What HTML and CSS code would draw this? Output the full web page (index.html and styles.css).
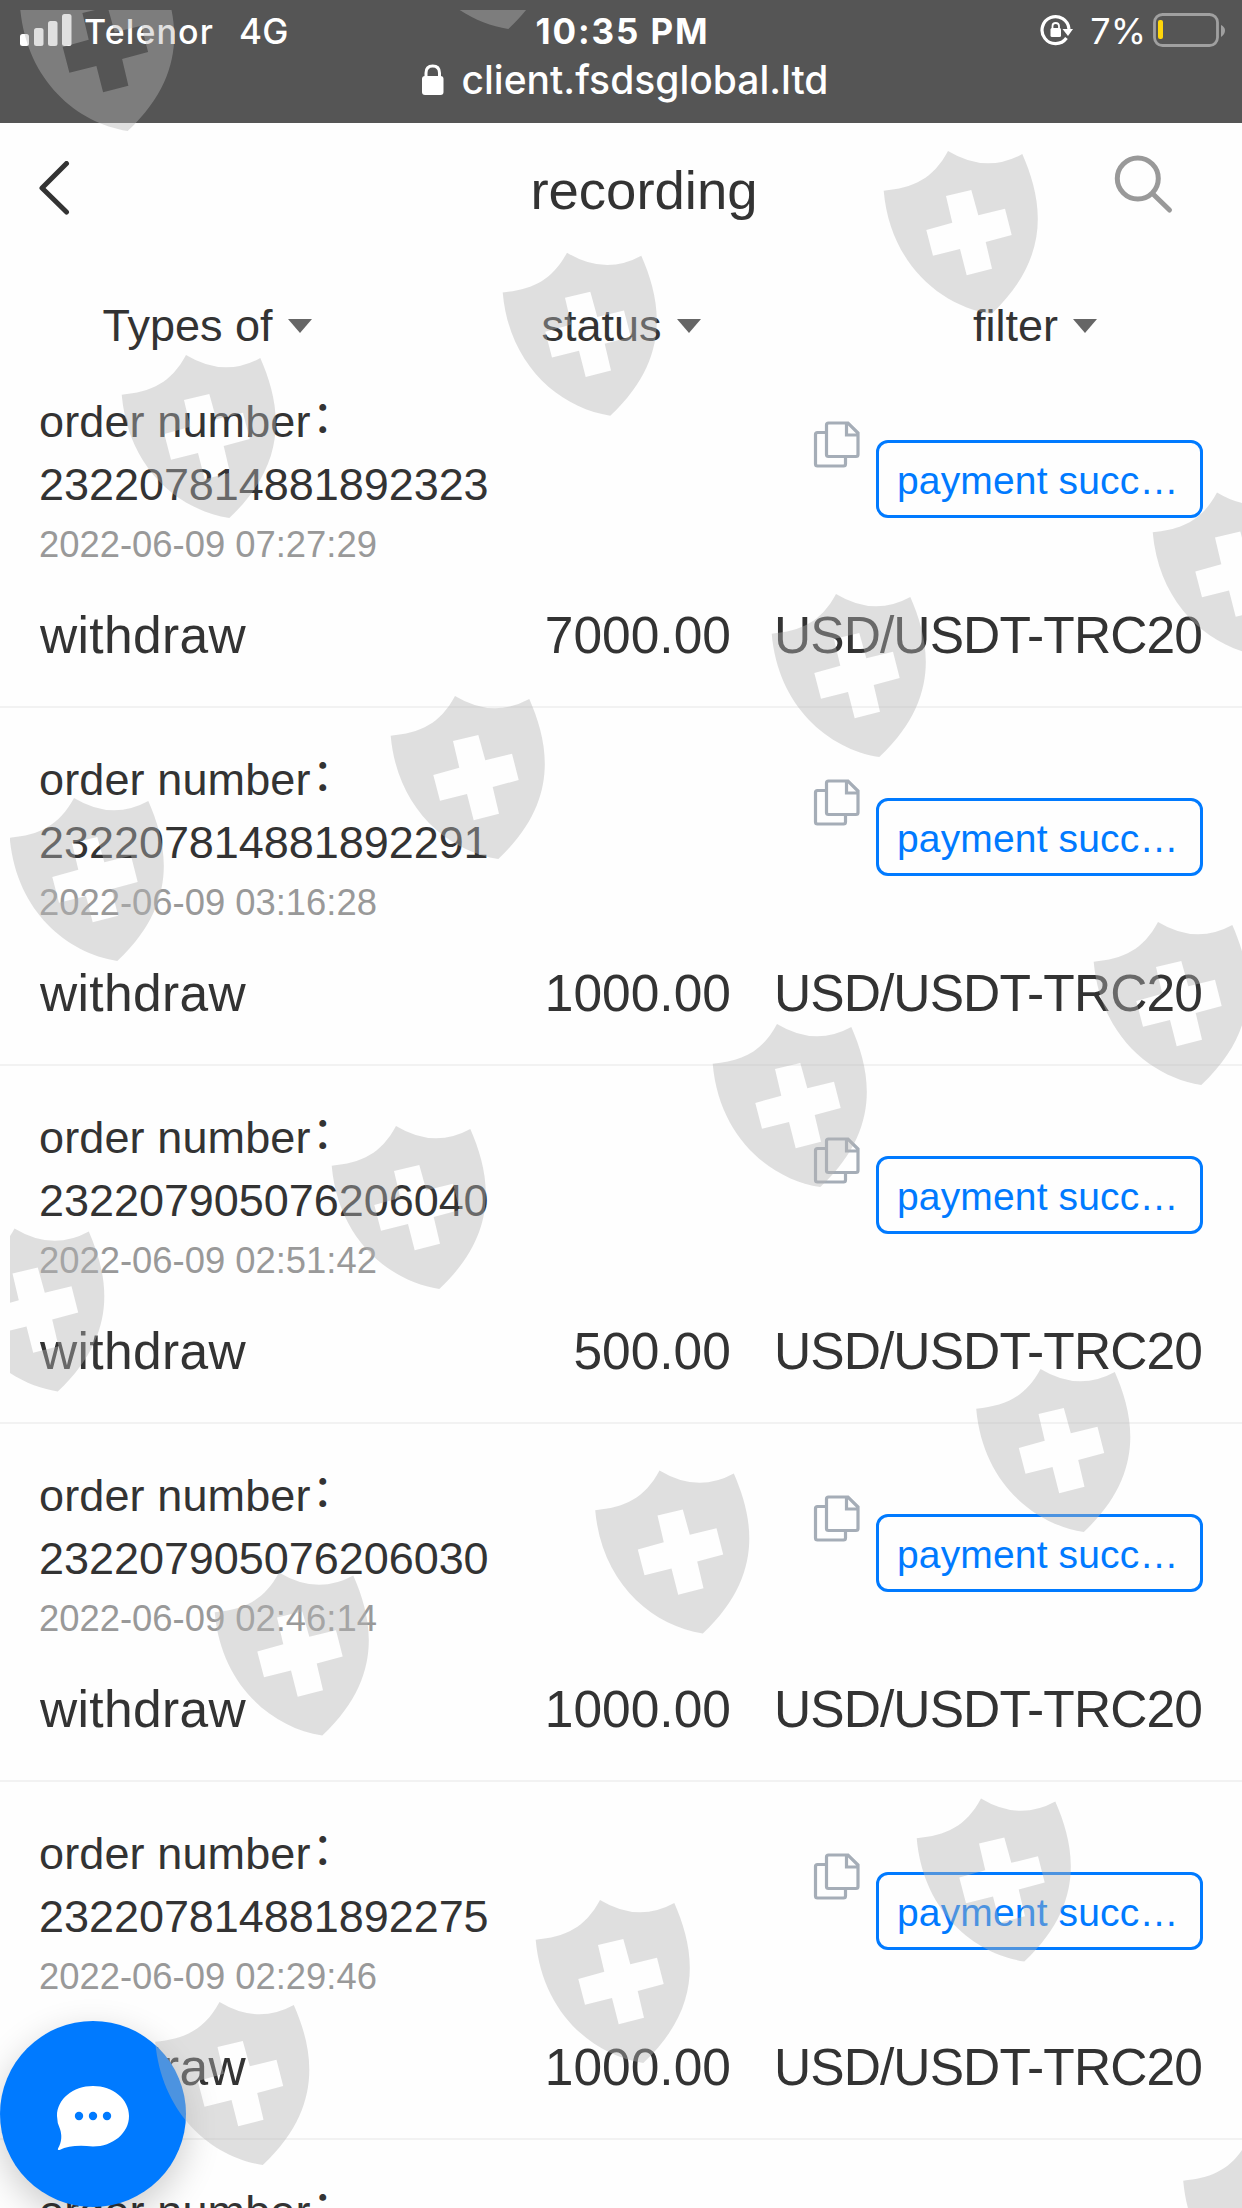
FILE: index.html
```html
<!DOCTYPE html>
<html lang="en">
<head>
<meta charset="utf-8">
<title>recording</title>
<link rel="stylesheet" href="styles.css">
</head>
<body>
<svg class="defs" width="0" height="0" aria-hidden="true">
  <symbol id="copy" viewBox="0 0 48 48">
    <path d="M13 11.5H5.5Q3.5 11.5 3.5 13.5V43Q3.5 45 5.5 45H31.500Q33.500 45 33.500 43V36" />
    <path d="M16.500 2H36L46 12V33.500Q46 35.500 44 35.500H16.500Q14.500 35.500 14.500 33.500V4Q14.500 2 16.500 2M34.500 3V14H45" />
  </symbol>
  <symbol id="shield" viewBox="-70 -5 170 175">
    <path fill-rule="evenodd" d="M0 0Q38 23 74.300 3C94 48 105 105 43.300 163C-8 155-58 112-64.300 39.700C-35 37-15 28 0 0ZM-2 45L4.300 71.700L-21.700 79L-15 104.700L12 98L18.700 124.300L44 117.700L37.700 91L63.700 84L57 57.700L30.300 64.300L23.300 39Z"/>
  </symbol>
</svg>
<div class="screen">
  <div class="browser">
    <div class="status">
      <div class="carrier">
        <svg width="52" height="34" viewBox="0 0 52 34" fill="#fff"><rect x="0" y="21" width="9" height="12" rx="2.500"/><rect x="14" y="15" width="9.500" height="18" rx="2.500"/><rect x="28" y="8" width="9.500" height="25" rx="2.500"/><rect x="42" y="1" width="9.500" height="32" rx="2.500"/></svg>
        <span class="operator">Telenor</span><span class="network">4G</span>
      </div>
      <div class="clock">10:35 PM</div>
      <div class="power">
        <svg width="34" height="34" viewBox="0 0 34 34"><path d="M26.500 25A13.500 13.500 0 1 1 29 16" fill="none" stroke="#fff" stroke-width="3.200"/><path d="M22.500 16H33L28 23Z" fill="#fff"/><rect x="10.500" y="15" width="10.500" height="9" rx="1.500" fill="#fff"/><path d="M12.500 16V13Q12.500 10 15.700 10T19 13V16" fill="none" stroke="#fff" stroke-width="1.800"/></svg>
        <span class="percent">7%</span>
        <svg width="74" height="36" viewBox="0 0 74 36"><rect x="1.500" y="1.500" width="63" height="31" rx="8" fill="none" stroke="#a0a0a0" stroke-width="2.800"/><rect x="5" y="7" width="5" height="19" rx="2" fill="#ffd60a"/><path d="M68 12Q72 14 72 17.500T68 24Z" fill="#a0a0a0"/></svg>
      </div>
    </div>
    <div class="address">
      <svg width="22" height="32" viewBox="0 0 22 32"><rect y="12" width="21.500" height="19" rx="3" fill="#fff"/><path d="M4 14V9Q4 2 10.700 2T17.500 9V14" fill="none" stroke="#fff" stroke-width="3"/></svg>
      <span>client.fsdsglobal.ltd</span>
    </div>
  </div>
  <header class="nav">
    <svg width="34" height="54" viewBox="0 0 34 54" fill="none" stroke="#333" stroke-width="5" stroke-linecap="round" stroke-linejoin="round"><path d="M28.500 3.500L4 28L28.500 52" transform="translate(0 -1)"/></svg>
    <h1>recording</h1>
    <svg width="62" height="62" viewBox="0 0 62 62" fill="none" stroke="#999" stroke-width="5" stroke-linecap="round"><circle cx="25.800" cy="25.500" r="20.500"/><path d="M41 41L57.500 57"/></svg>
  </header>
  <nav class="tabs">
    <span class="tab">Types of<i></i></span>
    <span class="tab">status<i></i></span>
    <span class="tab">filter<i></i></span>
  </nav>
  <main>
    <section class="record">
      <div class="order"><div class="ident"><p class="label">order number<b>：</b></p><p class="number">232207814881892323</p><p class="date">2022-06-09 07:27:29</p></div><svg class="copy"><use href="#copy"/></svg><div class="badge">payment succ…</div></div>
      <div class="money"><span class="kind">withdraw</span><span class="amount">7000.00</span><span class="coin">USD/USDT-TRC20</span></div>
    </section>
    <section class="record">
      <div class="order"><div class="ident"><p class="label">order number<b>：</b></p><p class="number">232207814881892291</p><p class="date">2022-06-09 03:16:28</p></div><svg class="copy"><use href="#copy"/></svg><div class="badge">payment succ…</div></div>
      <div class="money"><span class="kind">withdraw</span><span class="amount">1000.00</span><span class="coin">USD/USDT-TRC20</span></div>
    </section>
    <section class="record">
      <div class="order"><div class="ident"><p class="label">order number<b>：</b></p><p class="number">232207905076206040</p><p class="date">2022-06-09 02:51:42</p></div><svg class="copy"><use href="#copy"/></svg><div class="badge">payment succ…</div></div>
      <div class="money"><span class="kind">withdraw</span><span class="amount">500.00</span><span class="coin">USD/USDT-TRC20</span></div>
    </section>
    <section class="record">
      <div class="order"><div class="ident"><p class="label">order number<b>：</b></p><p class="number">232207905076206030</p><p class="date">2022-06-09 02:46:14</p></div><svg class="copy"><use href="#copy"/></svg><div class="badge">payment succ…</div></div>
      <div class="money"><span class="kind">withdraw</span><span class="amount">1000.00</span><span class="coin">USD/USDT-TRC20</span></div>
    </section>
    <section class="record">
      <div class="order"><div class="ident"><p class="label">order number<b>：</b></p><p class="number">232207814881892275</p><p class="date">2022-06-09 02:29:46</p></div><svg class="copy"><use href="#copy"/></svg><div class="badge">payment succ…</div></div>
      <div class="money"><span class="kind">withdraw</span><span class="amount">1000.00</span><span class="coin">USD/USDT-TRC20</span></div>
    </section>
    <section class="record">
      <div class="order"><div class="ident"><p class="label">order number<b>：</b></p></div></div>
    </section>
  </main>
  <div class="chat">
    <svg width="74" height="66" viewBox="0 0 74 66"><path fill="#fff" d="M37 1C57 1 73 14 73 31S57 61.500 37 61.500C22 60 12 61 3.500 65Q1.200 65.500 2 63.500C6 57 6 50 4 44Q1 38 1 31C1 14 17 1 37 1Z"/><g fill="#007aff"><circle cx="23" cy="31" r="4.200"/><circle cx="37" cy="31" r="4.200"/><circle cx="51" cy="31" r="4.200"/></g></svg>
  </div>
  <svg class="watermark" viewBox="10 10 1232 2198">
    <g>
      <use href="#shield" width="170" height="175" x="14.400" y="-37"/>
      <use href="#shield" width="170" height="175" x="395" y="-139"/>
      <use href="#shield" width="170" height="175" x="878" y="146"/>
      <use href="#shield" width="170" height="175" x="497" y="247.700"/>
      <use href="#shield" width="170" height="175" x="116" y="350"/>
      <use href="#shield" width="170" height="175" x="1147" y="487.500"/>
      <use href="#shield" width="170" height="175" x="766" y="589"/>
      <use href="#shield" width="170" height="175" x="385" y="691"/>
      <use href="#shield" width="170" height="175" x="4" y="793"/>
      <use href="#shield" width="170" height="175" x="1088" y="917"/>
      <use href="#shield" width="170" height="175" x="707" y="1019"/>
      <use href="#shield" width="170" height="175" x="326" y="1121"/>
      <use href="#shield" width="170" height="175" x="-55.500" y="1223.500"/>
      <use href="#shield" width="170" height="175" x="970.500" y="1364"/>
      <use href="#shield" width="170" height="175" x="589.500" y="1465.500"/>
      <use href="#shield" width="170" height="175" x="209" y="1567.500"/>
      <use href="#shield" width="170" height="175" x="911" y="1793.500"/>
      <use href="#shield" width="170" height="175" x="530" y="1895"/>
      <use href="#shield" width="170" height="175" x="149.500" y="1997"/>
      <use href="#shield" width="170" height="175" x="1177.500" y="2136"/>
    </g>
  </svg>
</div>
</body>
</html>
```
FILE: styles.css
```css
* { box-sizing: border-box; }
body { margin: 0; background: #fefefe; color: #333; font-family: "Liberation Sans", Arial, sans-serif; }
p, h1 { margin: 0; font-weight: 400; }
svg { display: block; flex: none; }
.defs { position: absolute; }
.screen { position: relative; width: 1242px; height: 2208px; overflow: hidden; }

.browser { height: 123px; background: #555; color: #fff; font-family: Inter, Roboto, sans-serif; }
.status { display: grid; grid-template-columns: 1fr auto 1fr; height: 60px; padding: 13px 15px 0 20px; line-height: 37px; font-size: 34px; }
.carrier { display: flex; font-weight: 500; }
.operator { margin-left: 12px; letter-spacing: 1.1px; }
.network { margin-left: 25px; font-size: 35px; letter-spacing: .5px; }
.clock { margin-right: 2px; font-weight: 700; font-size: 35px; letter-spacing: 1.9px; }
.power { display: flex; justify-content: flex-end; }
.power .percent { margin: 0 7px 0 16px; font-size: 36px; }
.address { display: flex; justify-content: center; padding-left: 8px; font-size: 39px; line-height: 40px; font-weight: 500; }
.address svg { margin: 4px 18px 0 0; }

.nav { display: flex; justify-content: space-between; height: 153px; padding: 30px 68px 0 38px; }
.nav svg:first-child { margin-top: 8px; }
.nav h1 { margin-left: 104px; font-size: 54.5px; line-height: 75px; }
.tabs { display: grid; grid-template-columns: repeat(3, 1fr); height: 74px; }
.tab { display: flex; justify-content: center; align-items: center; height: 100px; font-size: 45px; line-height: 60px; }
.tab i { margin-left: 15px; border: solid transparent; border-width: 14px 12px 0; border-top-color: #666; }

.record { height: 358px; padding: 40px 39px 0; border-bottom: 2px solid #f2f2f2; }
.order { display: flex; height: 215px; }
.ident { flex: 1; }
.label, .number { height: 63px; line-height: 63px; font-size: 45px; letter-spacing: -.05px; }
.label { letter-spacing: .12px; }
.label b { position: relative; top: -4px; margin-left: 1px; font-family: "Noto Sans CJK SC", sans-serif; font-weight: 400; line-height: 1; }
.date { font-size: 36.4px; line-height: 57px; color: #999; }
.copy { width: 48px; height: 48px; margin: 31px 16px 0 0; fill: none; stroke: #a5adb7; stroke-width: 3.2; }
.badge { width: 327px; height: 78px; margin-top: 50px; padding-left: 18px; border: 3px solid #007aff; border-radius: 12px; color: #007aff; font-size: 39px; letter-spacing: .15px; line-height: 75px; white-space: nowrap; }
.money { display: flex; font-size: 51.5px; line-height: 60px; }
.kind { margin-left: 1px; letter-spacing: .35px; }
.amount { margin-left: auto; }
.coin { margin: 0 1px 0 43px; letter-spacing: -.9px; }

.chat { position: absolute; left: 0; top: 2021px; display: flex; align-items: center; justify-content: center; width: 186px; height: 186px; border-radius: 50%; background: #007aff; box-shadow: 0 12px 36px rgba(0, 0, 0, .2); }
.chat svg { margin-top: 7px; }
.watermark { position: absolute; left: 10px; top: 10px; width: 1232px; height: 2198px; fill: rgba(180, 180, 180, .418); }
```
